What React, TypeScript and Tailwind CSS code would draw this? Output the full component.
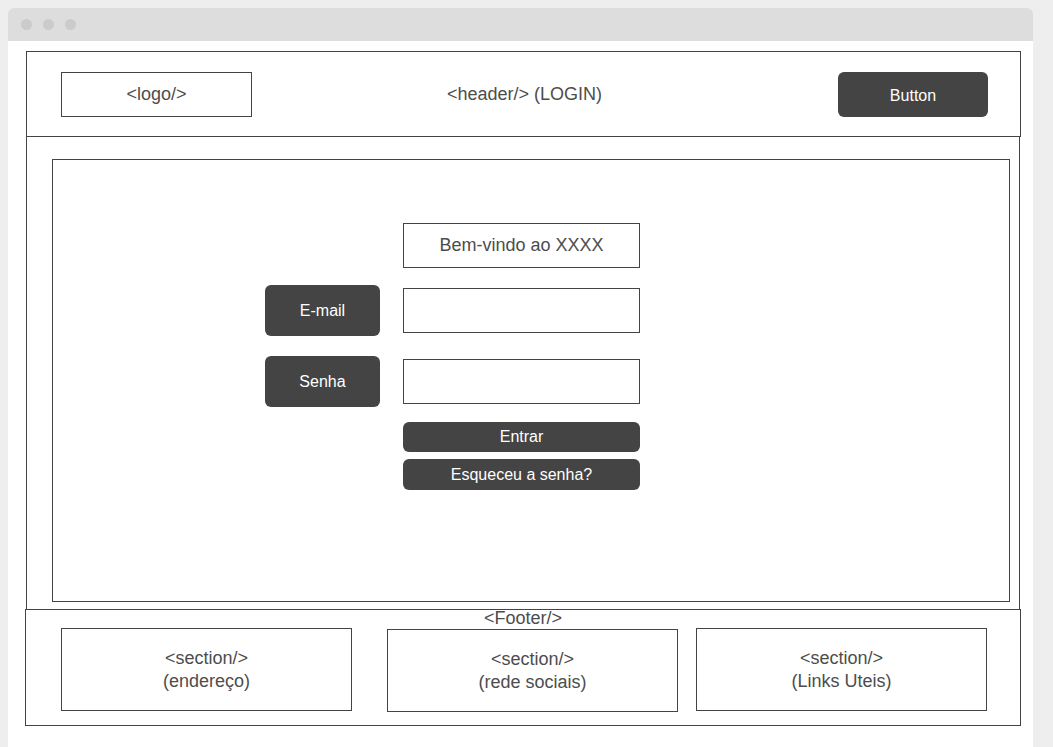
import React from 'react';

const font = { fontFamily: '"Liberation Sans", Arial, sans-serif' };

function Section({ title, sub, className = '' }: { title: string; sub: string; className?: string }) {
  return (
    <div
      className={`w-[291px] h-[83px] border border-[#444] flex flex-col items-center justify-center text-[18px] leading-[23px] text-[#4d4d4d] ${className}`}
    >
      <span>{title}</span>
      <span>{sub}</span>
    </div>
  );
}

function Label({ text }: { text: string }) {
  return (
    <div className="w-[115px] h-[51px] rounded-md bg-[#444] text-white text-[16px] flex items-center justify-center">
      {text}
    </div>
  );
}

function Field() {
  return <div className="w-[237px] h-[45px] border border-[#444] bg-white" />;
}

export default function App() {
  return (
    <div className="w-[1053px] h-[747px] bg-[#eeeeee] pt-2 pl-2 overflow-hidden" style={font}>
      <div className="w-[1025px] h-[739px] flex flex-col">
        {/* window chrome */}
        <div className="h-[33px] bg-[#dddddd] rounded-t-md flex items-center gap-[11px] pl-[13px]">
          <span className="w-[11px] h-[11px] rounded-full bg-[#cbcbcb]" />
          <span className="w-[11px] h-[11px] rounded-full bg-[#cbcbcb]" />
          <span className="w-[11px] h-[11px] rounded-full bg-[#cbcbcb]" />
        </div>

        <div className="flex-1 bg-white pt-[10px] pl-[17px]">
          {/* header */}
          <div className="ml-px w-[995px] h-[86px] border border-[#444] grid grid-cols-3 items-center pl-[34px] pr-[32px]">
            <div className="w-[191px] h-[45px] border border-[#444] flex items-center justify-center text-[18px] text-[#4d4d4d]">
              &lt;logo/&gt;
            </div>
            <div className="text-center text-[18px] text-[#4d4d4d]">&lt;header/&gt; (LOGIN)</div>
            <div className="justify-self-end w-[150px] h-[45px] rounded-md bg-[#444] text-white text-[16px] flex items-center justify-center pt-[3px]">
              Button
            </div>
          </div>

          {/* main */}
          <div className="ml-px w-[994px] h-[472px] border-x border-[#444] pt-[22px] pl-[25px]">
            <div className="w-[958px] h-[443px] border border-[#444] pl-[212px] pt-[63px]">
              <div className="flex items-center gap-[23px]">
                <div className="w-[115px]" />
                <div className="w-[237px] h-[45px] border border-[#444] flex items-center justify-center text-[18px] text-[#4d4d4d]">
                  Bem-vindo ao XXXX
                </div>
              </div>
              <div className="flex items-center gap-[23px] mt-[17px]">
                <Label text="E-mail" />
                <Field />
              </div>
              <div className="flex items-center gap-[23px] mt-[20px]">
                <Label text="Senha" />
                <Field />
              </div>
              <div className="flex items-center gap-[23px] mt-[15px]">
                <div className="w-[115px]" />
                <div className="w-[237px] h-[30px] rounded-md bg-[#444] text-white text-[16px] flex items-center justify-center">
                  Entrar
                </div>
              </div>
              <div className="flex items-center gap-[23px] mt-[7px]">
                <div className="w-[115px]" />
                <div className="w-[237px] h-[31px] rounded-md bg-[#444] text-white text-[16px] flex items-center justify-center">
                  Esqueceu a senha?
                </div>
              </div>
            </div>
          </div>

          {/* footer */}
          <div className="w-[996px] h-[117px] border border-[#444]">
            <div className="h-[18px] leading-[16px] text-center text-[18px] text-[#4d4d4d]">&lt;Footer/&gt;</div>
            <div className="flex items-start pl-[35px]">
              <Section title="<section/>" sub="(endereço)" />
              <Section title="<section/>" sub="(rede sociais)" className="ml-[35px] mt-px" />
              <Section title="<section/>" sub="(Links Uteis)" className="ml-[18px]" />
            </div>
          </div>
        </div>
      </div>
    </div>
  );
}
